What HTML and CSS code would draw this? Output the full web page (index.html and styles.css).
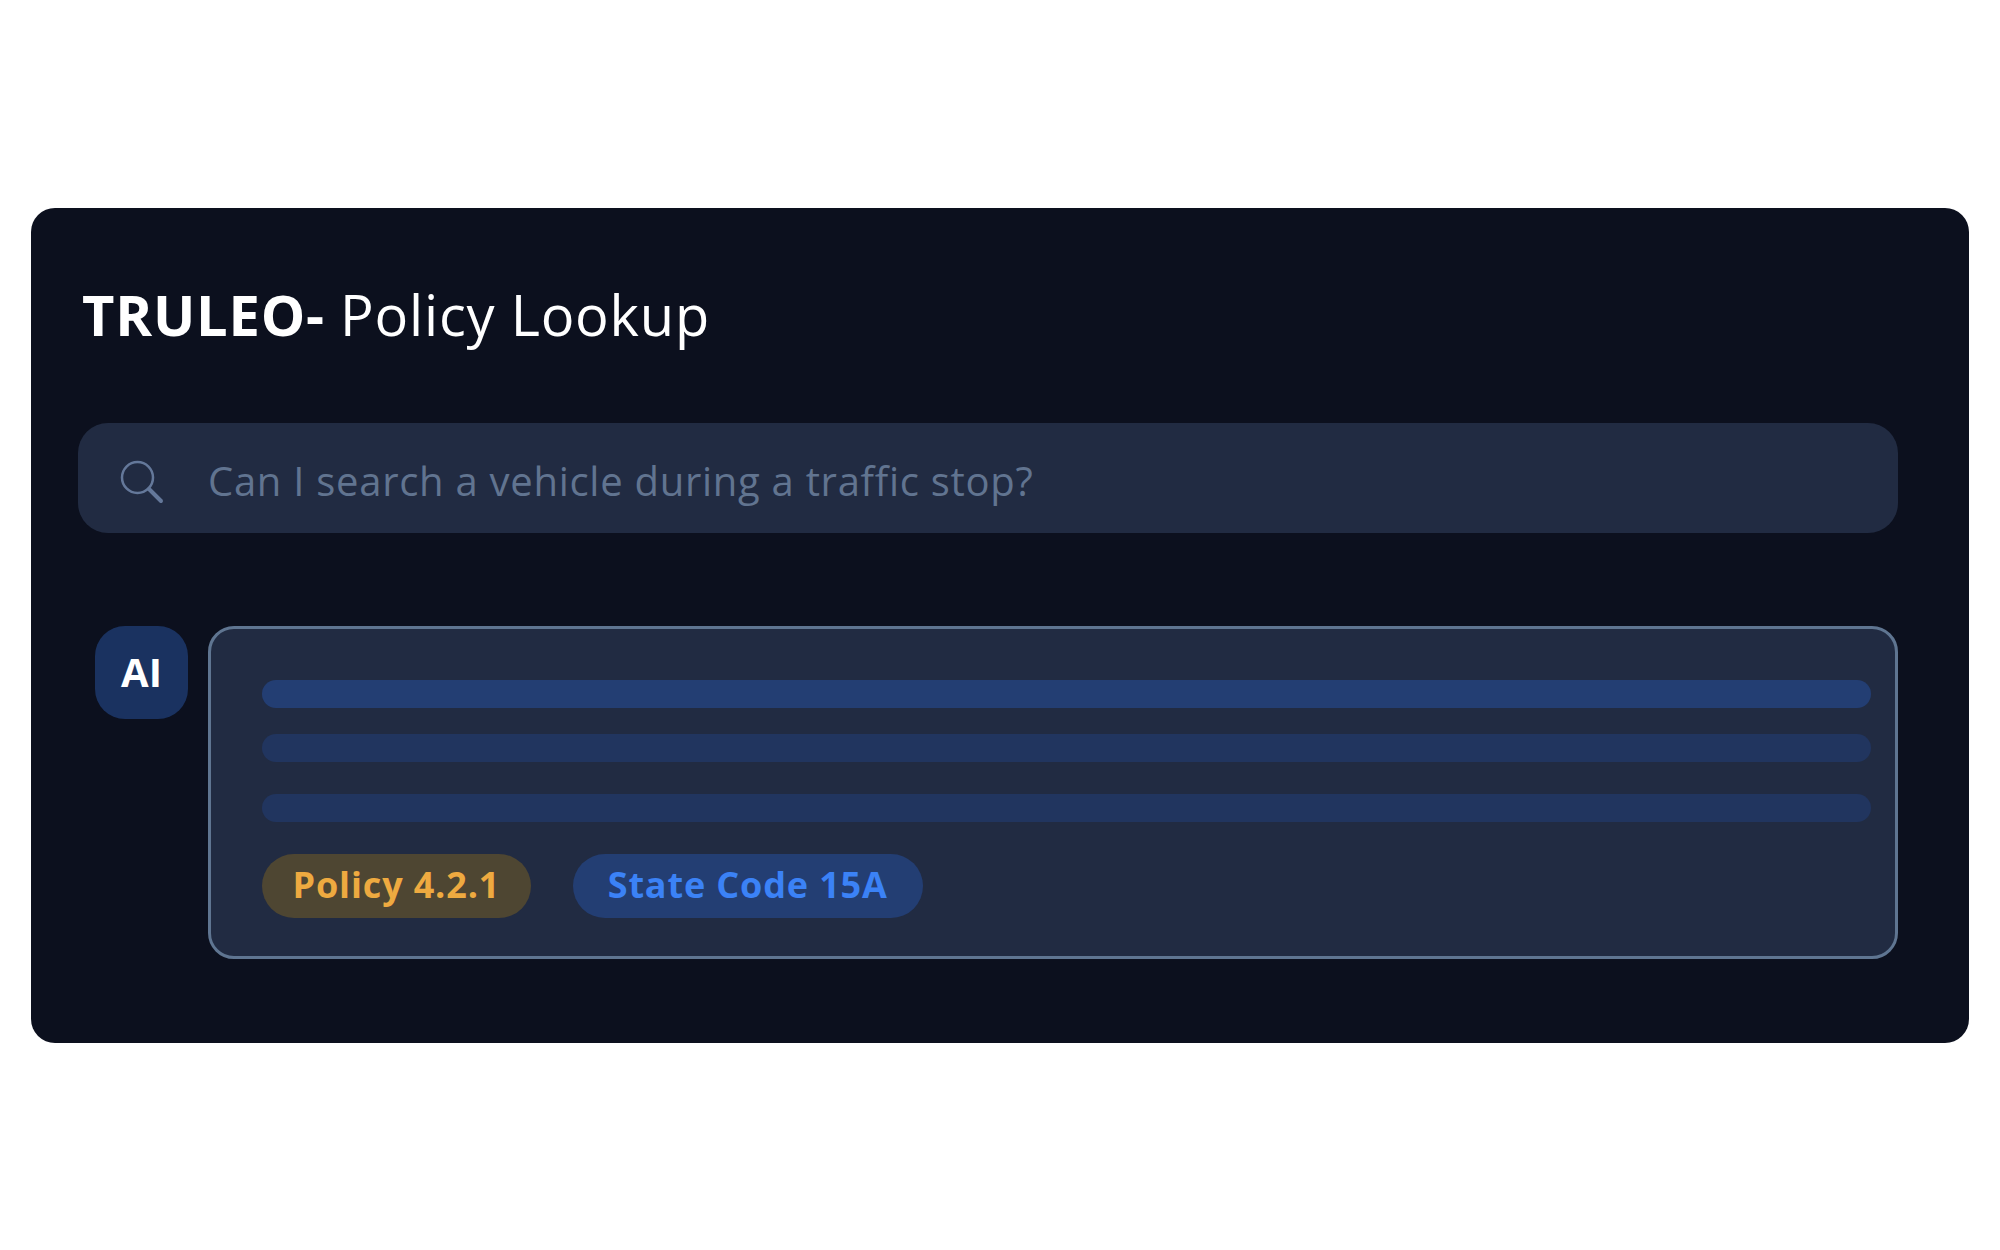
FILE: index.html
```html
<!DOCTYPE html>
<html lang="en">

<head>
    <meta charset="UTF-8">
    <meta name="viewport" content="width=device-width, initial-scale=1.0">
    <title>Policy Lookup</title>
    <link rel="stylesheet" href="styles.css">
</head>

<body>
    <div class="panel">
        <h1 class="title"><strong>TRULEO-</strong> Policy Lookup</h1>

        <div class="search">
            <svg class="search-icon" viewBox="0 0 44 44" width="44" height="44" aria-hidden="true">
                <circle cx="17.5" cy="17.5" r="15.5"></circle>
                <path d="M29 29 L41 41"></path>
            </svg>
            <span class="search-text">Can I search a vehicle during a traffic stop?</span>
        </div>

        <div class="answer">
            <div class="avatar">AI</div>
            <div class="card">
                <div class="bar bar-strong"></div>
                <div class="bar"></div>
                <div class="bar bar-last"></div>
                <div class="tags">
                    <span class="tag tag-policy">Policy 4.2.1</span>
                    <span class="tag tag-code">State Code 15A</span>
                </div>
            </div>
        </div>
    </div>
</body>

</html>
```

FILE: styles.css
```css
body {
    font-family: "Open Sans", sans-serif;
    margin: 0;
    padding: 0 31px;
    background-color: #ffffff;
    display: flex;
    align-items: center;
    height: 100vh;
    box-sizing: border-box;
}

.panel {
    flex: 1;
    height: 835px;
    box-sizing: border-box;
    padding: 68px 71px 0 47px;
    background-color: #0c101e;
    border-radius: 24px;
}

.title {
    margin: 0 0 0 4px;
    height: 147px;
    font-size: 56px;
    line-height: 76px;
    font-weight: 400;
    letter-spacing: 0.78px;
    color: #ffffff;
}

.title strong {
    font-weight: 700;
}

.search {
    display: flex;
    align-items: center;
    height: 110px;
    padding-left: 42px;
    background-color: #212b42;
    border-radius: 30px;
}

.search-icon {
    flex: none;
    margin-top: 9px;
    margin-right: 44px;
    fill: none;
    stroke: #64789a;
    stroke-width: 2.5;
}

.search-icon path {
    stroke-width: 4;
    stroke-linecap: round;
}

.search-text {
    padding-top: 5px;
    font-size: 40px;
    letter-spacing: 0.72px;
    color: #617490;
}

.answer {
    display: flex;
    align-items: flex-start;
    gap: 20px;
    margin-top: 93px;
    padding-left: 17px;
}

.avatar {
    flex: none;
    width: 93px;
    height: 93px;
    padding-bottom: 2px;
    box-sizing: border-box;
    border-radius: 30px;
    background-color: #1a3260;
    color: #ffffff;
    font-size: 40px;
    font-weight: 700;
    display: flex;
    align-items: center;
    justify-content: center;
}

.card {
    flex: 1;
    padding: 51px 24px 38px 51px;
    background-color: #212b42;
    border: 3px solid #5f7591;
    border-radius: 26px;
}

.bar {
    height: 28px;
    margin-bottom: 25px;
    border-radius: 14px;
    background-color: #21355f;
}

.bar-strong {
    margin-bottom: 26px;
    background-color: #233e73;
}

.bar-last {
    margin-top: 32px;
    margin-bottom: 32px;
}

.tags {
    display: flex;
    gap: 42px;
}

.tag {
    height: 64px;
    line-height: 62px;
    border-radius: 32px;
    font-size: 36px;
    font-weight: 700;
    letter-spacing: 0.85px;
}

.tag-policy {
    padding: 0 30.5px;
    background-color: #4e4632;
    color: #eeaa40;
}

.tag-code {
    padding: 0 35px;
    background-color: #233e73;
    color: #3b82f6;
}
```
